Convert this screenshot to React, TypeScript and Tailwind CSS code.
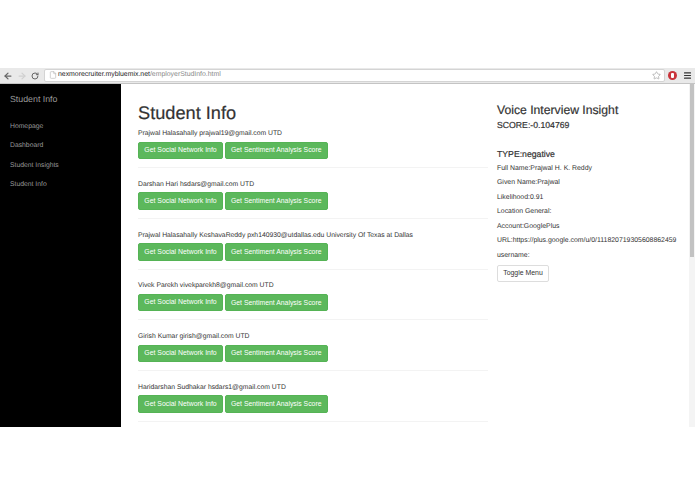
import { ArrowLeft, ArrowRight, RotateCw, File, Star, Menu } from 'lucide-react'

const links = ['Homepage', 'Dashboard', 'Student Insights', 'Student Info']

const students = [
  'Prajwal Halasahally prajwal19@gmail.com UTD',
  'Darshan Hari hsdars@gmail.com UTD',
  'Prajwal Halasahally KeshavaReddy pxh140930@utdallas.edu University Of Texas at Dallas',
  'Vivek Parekh vivekparekh8@gmail.com UTD',
  'Girish Kumar girish@gmail.com UTD',
  'Haridarshan Sudhakar hsdars1@gmail.com UTD',
]

const details = [
  'Full Name:Prajwal H. K. Reddy',
  'Given Name:Prajwal',
  'Likelihood:0.91',
  'Location General:',
  'Account:GooglePlus',
  'URL:https://plus.google.com/u/0/111820719305608862459',
  'username:',
]

export default function App() {
  return (
    <div className="h-[494px] w-[695px] overflow-hidden bg-white font-['Liberation_Sans',sans-serif] text-[#333] opacity-[0.995] [text-rendering:geometricPrecision]">
      <div className="h-[68px]" />

      {/* browser bar */}
      <div className="flex h-[16px] items-center border-b border-[#c4c4c4] bg-[#e9e9e9]">
        <div className="flex w-[44px] items-center gap-[4px] pl-[3px]">
          <ArrowLeft size={10} strokeWidth={3} className="text-[#666]" />
          <ArrowRight size={10} strokeWidth={3} className="text-[#d0d0d0]" />
          <RotateCw size={8} strokeWidth={3} className="text-[#666]" />
        </div>
        <div className="flex h-[13px] w-[621px] items-center justify-between rounded-[2px] border border-[#d4d4d4] bg-white pl-[4px] pr-[3px]">
          <div className="flex items-center gap-[1px]">
            <File size={8} className="text-[#bbb]" />
            <span className="text-[6.9px] text-[#222]">
              nexmorecruiter.mybluemix.net<span className="text-[#888]">/employerStudInfo.html</span>
            </span>
          </div>
          <Star size={9} className="text-[#aaa]" />
        </div>
        <div className="ml-[3px] flex items-center gap-[6px]">
          <div className="flex h-[9px] w-[9px] items-center justify-center rounded-full bg-[#c9333a]">
            <div className="h-[5px] w-[3px] rounded-[1px] bg-white" />
          </div>
          <Menu size={9} strokeWidth={3} className="text-[#333]" />
        </div>
      </div>

      <div className="flex h-[343px]">
        {/* sidebar */}
        <div className="w-[121px] shrink-0 bg-black pl-[10px] pt-[9px] text-[#999]">
          <div className="text-[8.8px] leading-[12px]">Student Info</div>
          <div className="mt-[16px] flex flex-col gap-[8.3px]">
            {links.map((l) => (
              <div key={l} className="text-[6.8px] leading-[11px]">{l}</div>
            ))}
          </div>
        </div>

        {/* student list */}
        <div className="w-[367px] shrink-0 overflow-hidden pl-[17px]">
          <h1 className="mt-[18px] text-[18.2px] font-medium leading-[22px] [-webkit-text-stroke:0.2px]">Student Info</h1>
          <div className="mt-[4px]">
            {students.map((s) => (
              <div key={s} className="h-[50.8px]">
                <div className="h-[40px] border-b border-[#f3f3f3]">
                  <p className="text-[6.8px] leading-[11px]">{s}</p>
                  <div className="mt-[2.5px] flex gap-[2px]">
                    <button className="h-[17.5px] w-[85px] rounded-[2px] border border-[#55b355] bg-[#5cb85c] text-[6.9px] text-white">
                      Get Social Network Info
                    </button>
                    <button className="h-[17.5px] w-[102.5px] rounded-[2px] border border-[#55b355] bg-[#5cb85c] text-[6.85px] text-white">
                      Get Sentiment Analysis Score
                    </button>
                  </div>
                </div>
              </div>
            ))}
          </div>
        </div>

        {/* insight panel */}
        <div className="flex-1 pl-[9px] pt-[19px]">
          <h3 className="text-[12.2px] font-medium leading-[15px] [-webkit-text-stroke:0.2px]">Voice Interview Insight</h3>
          <h4 className="mt-[1px] text-[8.7px] font-medium leading-[12px] [-webkit-text-stroke:0.2px]">SCORE:-0.104769</h4>
          <h4 className="mt-[17px] text-[8.7px] font-medium leading-[12px] [-webkit-text-stroke:0.2px]">TYPE:negative</h4>
          <div className="mt-[1.5px]">
            {details.map((d) => (
              <p key={d} className="h-[14.5px] whitespace-nowrap text-[6.9px] leading-[14.5px]">{d}</p>
            ))}
          </div>
          <button className="mt-[1.5px] block h-[17px] w-[52px] rounded-[2px] border border-[#ddd] bg-white text-[6.9px]">
            Toggle Menu
          </button>
        </div>

        {/* scrollbar */}
        <div className="w-[6px] shrink-0 bg-[#f4f4f4]">
          <div className="ml-[1px] h-[173px] w-[4px] bg-[#c2c2c2]" />
        </div>
      </div>
    </div>
  )
}
